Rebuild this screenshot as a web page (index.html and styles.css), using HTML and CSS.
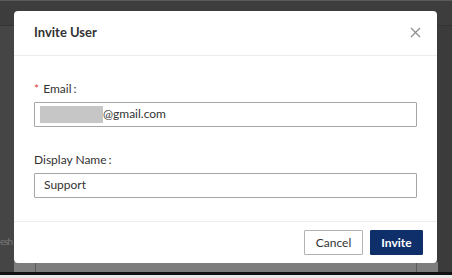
FILE: index.html
```html
<!doctype html>
<html lang="en">
<head>
	<meta charset="UTF-8">
	<title>Invite User</title>
	<link rel="stylesheet" href="styles.css">
</head>
<body>
	<div class="page">
		<div class="topbar"></div>
		<div class="content">
			<div class="side"><span class="peek">esh</span></div>
			<div class="main"></div>
			<div class="side-r"></div>
		</div>
		<div class="rows">
			<div class="cell-a"></div>
			<div class="cell-b"></div>
			<div class="cell-c"></div>
		</div>
		<div class="baseline"></div>
	</div>

	<div class="modal">
		<div class="modal-head">
			<span class="modal-title">Invite User</span>
			<svg class="close" width="11" height="11" viewBox="0 0 11 11">
				<path d="M1 1L10 10M10 1L1 10" stroke="#8c8c8c" stroke-width="1.2" fill="none"/>
			</svg>
		</div>
		<div class="modal-body">
			<div class="field">
				<label class="lbl"><span class="req">*</span> Email<span class="colon">:</span></label>
				<div class="input"><span class="mask"></span>@gmail.com</div>
			</div>
			<div class="field">
				<label class="lbl">Display Name<span class="colon">:</span></label>
				<div class="input">Support</div>
			</div>
		</div>
		<div class="modal-foot">
			<button class="btn btn-cancel">Cancel</button>
			<button class="btn btn-primary">Invite</button>
		</div>
	</div>
</body>
</html>
```
FILE: styles.css
```css
body,div,label,button{
	margin:0;
	padding:0;
}
body{
	width:452px;
	height:278px;
	overflow:hidden;
	background:#424242;
	font:12px/1.5 Lato,"Open Sans",sans-serif;
	color:#333;
}
.page{
	display:flex;
	flex-direction:column;
	height:278px;
}
.topbar{
	height:26px;
	background:#3d3d3d;
	border-top:1px solid #5a5a5a;
	border-bottom:1px solid #333;
	box-sizing:border-box;
}
.content{
	display:flex;
	height:236px;
}
.side{
	width:14px;
	background:#454545;
	color:#777;
	font-size:10px;
	padding-top:208px;
	overflow:hidden;
}
.peek{
	display:block;
	width:14px;
	letter-spacing:-1px;
}
.main{
	flex:1;
	background:#454545;
}
.side-r{
	width:15px;
	background:#3b3b3b;
	border-left:1px solid #363636;
}
.rows{
	display:flex;
	height:10px;
	background:#7d7d7d;
}
.cell-a{
	width:35px;
	border-right:1px solid #5c5c5c;
	background:linear-gradient(to right,#454545 14px,#7d7d7d 14px);
}
.cell-b{
	width:380px;
	border-right:1px solid #5c5c5c;
}
.cell-c{
	flex:1;
	background:linear-gradient(to right,#7d7d7d 21px,#3b3b3b 21px);
}
.baseline{
	height:3px;
	background:#111;
	border-bottom:3px solid #e8e8e8;
}
.modal{
	position:absolute;
	left:14px;
	top:11px;
	width:423px;
	height:252px;
	background:#fff;
	border-radius:4px;
	display:flex;
	flex-direction:column;
}
.modal-head{
	height:45px;
	display:flex;
	align-items:center;
	justify-content:space-between;
	padding:0 16px 0 20px;
	border-bottom:1px solid #ececec;
}
.modal-title{
	font-weight:700;
	font-size:13px;
	color:#333;
}
.modal-body{
	flex:1;
	padding:23px 20px 0 20px;
}
.field{
	margin-bottom:23px;
}
.lbl{
	display:block;
	height:23px;
	line-height:20px;
	color:#333;
}
.colon{
	margin-left:2px;
}
.req{
	color:#e0433b;
	margin-right:1px;
}
.input{
	height:23px;
	border:1px solid #a6a6a6;
	border-radius:1px;
	padding:0 0 0 9px;
	display:flex;
	align-items:center;
}
.mask{
	display:inline-block;
	width:63px;
	height:17px;
	margin-left:-4px;
	background:#c6c6c6;
}
.modal-foot{
	height:43px;
	border-top:1px solid #ececec;
	display:flex;
	justify-content:flex-end;
	align-items:center;
	gap:7px;
	padding:0 14px 0 0;
	box-sizing:border-box;
}
.btn{
	height:25px;
	border:1px solid #b3b3b3;
	background:#fff;
	color:#333;
	font:12px Lato,"Open Sans",sans-serif;
	border-radius:1px;
}
.btn-cancel{
	width:59px;
}
.btn-primary{
	width:53px;
	background:#0e2f6a;
	border-color:#0e2f6a;
	color:#fff;
	font-weight:700;
}
```
